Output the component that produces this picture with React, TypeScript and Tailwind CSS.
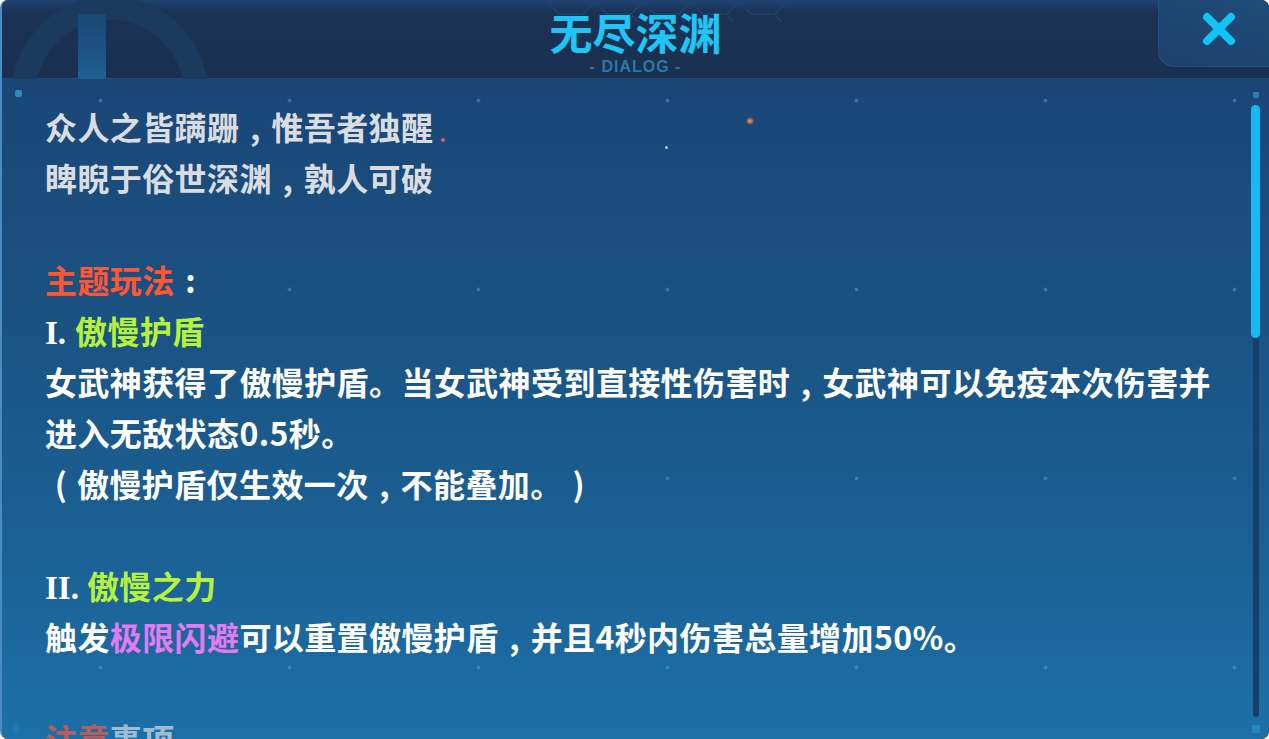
import React from "react";

const CJK = "font-['Noto_Sans_CJK_SC','Noto_Sans',sans-serif]";
const SERIF = "font-['Liberation_Serif',serif]";

function CloseIcon() {
  return (
    <svg width="34" height="34" viewBox="0 0 34 34" fill="none">
      <path d="M5 5 L29 29 M29 5 L5 29" stroke="#14c3f6" strokeWidth="8" strokeLinecap="round" />
    </svg>
  );
}

function HexStrip() {
  return (
    <svg width="260" height="22" viewBox="0 0 260 22" fill="none" className="absolute left-[545px] top-0">
      <path
        d="M0 2 L12 14 L36 14 L48 2 M48 2 L60 14 L84 14 L96 2 M96 2 L108 14 L132 14 L144 2 M144 2 L156 14 L180 14 L192 2 M192 2 L204 14 L228 14 L240 2 M12 14 L6 22 M36 14 L42 22 M84 14 L90 22 M132 14 L138 22 M180 14 L186 22 M228 14 L234 22"
        stroke="#21436a"
        strokeWidth="1.5"
      />
    </svg>
  );
}

// full-width punctuation drawn centred in its em cell
function P({ c }: { c: string }) {
  return <span className="inline-block w-[32px] text-center">{c}</span>;
}

function Line({ children, className = "" }: { children?: React.ReactNode; className?: string }) {
  return <div className={`h-[51px] leading-[51px] whitespace-nowrap ${className}`}>{children}</div>;
}

export default function App() {
  return (
    <div className={`relative w-[1269px] h-[739px] overflow-hidden bg-[#1a3051] rounded-[8px] border-l-2 border-[#4a8cc2] ${CJK}`}>
      {/* header */}
      <header className="relative h-[79px] bg-[linear-gradient(180deg,#1d4373_0px,#1b3254_12px,#1a3051_100%)] border-b border-[#21497a] flex flex-col items-center pt-[8px]">
        <div className="absolute left-[10px] top-[-4px] w-[196px] h-[196px] rounded-full border-[24px] border-[#1c395e]" />
        <div className="absolute left-[76px] top-[14px] w-[28px] h-[65px] bg-[linear-gradient(180deg,#1b4774,#1e5f92)]" />
        <HexStrip />
        <h1 className="relative text-[43px] leading-[46px] font-bold text-[#1ec6f6]">无尽深渊</h1>
        <div className="relative mt-[5px] text-[16px] leading-[16px] font-bold tracking-[1px] text-[#2a78a8] font-['Liberation_Sans',sans-serif]">
          - DIALOG -
        </div>
        <button className="absolute right-0 top-0 w-[111px] h-[67px] rounded-bl-[16px] bg-[linear-gradient(200deg,#1f4c7a,#1c406a)] border-l border-b border-[#23507e] flex items-start pl-[43px] pt-[12px]">
          <CloseIcon />
        </button>
      </header>

      {/* body */}
      <section className="relative h-[660px] overflow-hidden bg-[linear-gradient(180deg,#1a4676_0%,#1a5282_35%,#1b6094_70%,#1c70a8_100%)]">
        <div className="absolute inset-0 pointer-events-none bg-[image:radial-gradient(circle,rgba(120,170,220,0.42)_1.2px,transparent_2.4px)] bg-[size:189px_189px] bg-[position:4px_-73px]" />

        {/* sparkles */}
        <div className="absolute left-[744px] top-[38px] w-[8px] h-[8px] rounded-full bg-[radial-gradient(circle,#ff9a5a_0%,rgba(255,120,60,0.6)_40%,transparent_75%)]" />
        <div className="absolute left-[439px] top-[59px] w-[4px] h-[4px] rounded-full bg-[#d8606e]" />
        <div className="absolute left-[663px] top-[67px] w-[3px] h-[3px] rounded-full bg-[#a8cbee]" />

        {/* corner markers */}
        <div className="absolute left-[13px] top-[11px] w-[7px] h-[7px] rounded-[2px] bg-[#2b8cc4]" />
        <div className="absolute left-[11px] bottom-[6px] w-[6px] h-[9px] rounded-[1px] bg-[#1f7ab4]" />

        <div className="relative pl-[43px] pt-[22px] text-[32px] font-bold tracking-[0.4px] text-white">
          <Line className="text-[#d9dde2]">
            众人之皆蹒跚<P c="," />惟吾者独醒
          </Line>
          <Line className="text-[#d9dde2]">
            睥睨于俗世深渊<P c="," />孰人可破
          </Line>
          <Line />
          <Line>
            <span className="text-[#ff5634]">主题玩法</span>
            <P c=":" />
          </Line>
          <Line>
            <span className={`${SERIF} text-[33px] tracking-normal mr-[9px]`}>I.</span>
            <span className="text-[#b6f23c]">傲慢护盾</span>
          </Line>
          <Line>
            女武神获得了傲慢护盾。当女武神受到直接性伤害时<P c="," />女武神可以免疫本次伤害并
          </Line>
          <Line>进入无敌状态0.5秒。</Line>
          <Line>
            <P c="(" />傲慢护盾仅生效一次<P c="," />不能叠加。<P c=")" />
          </Line>
          <Line />
          <Line>
            <span className={`${SERIF} text-[33px] tracking-normal mr-[8px]`}>II.</span>
            <span className="text-[#b6f23c]">傲慢之力</span>
          </Line>
          <Line>
            触发<span className="text-[#e27af0]">极限闪避</span>可以重置傲慢护盾<P c="," />并且4秒内伤害总量增加50%。
          </Line>
          <Line />
          <Line className="opacity-70">
            <span className="text-[#ff5634]">注意</span>
            <span className="text-[#d9dde2]">事项</span>
          </Line>
        </div>

        {/* scrollbar */}
        <div className="absolute right-[9px] top-[13px] bottom-[6px] w-[9px] flex flex-col items-center">
          <div className="w-[6px] h-[6px] rounded-[1px] bg-[#2a7cb2]" />
          <div className="relative mt-[7px] flex-1 w-[6px] rounded-full bg-[#183f69]">
            <div className="absolute left-[-1.5px] top-0 w-[9px] h-[233px] rounded-full bg-[#18b9f1]" />
          </div>
          <div className="mt-[8px] w-[8px] h-[8px] rounded-[1px] bg-[#1f88c2]" />
        </div>
      </section>
    </div>
  );
}
